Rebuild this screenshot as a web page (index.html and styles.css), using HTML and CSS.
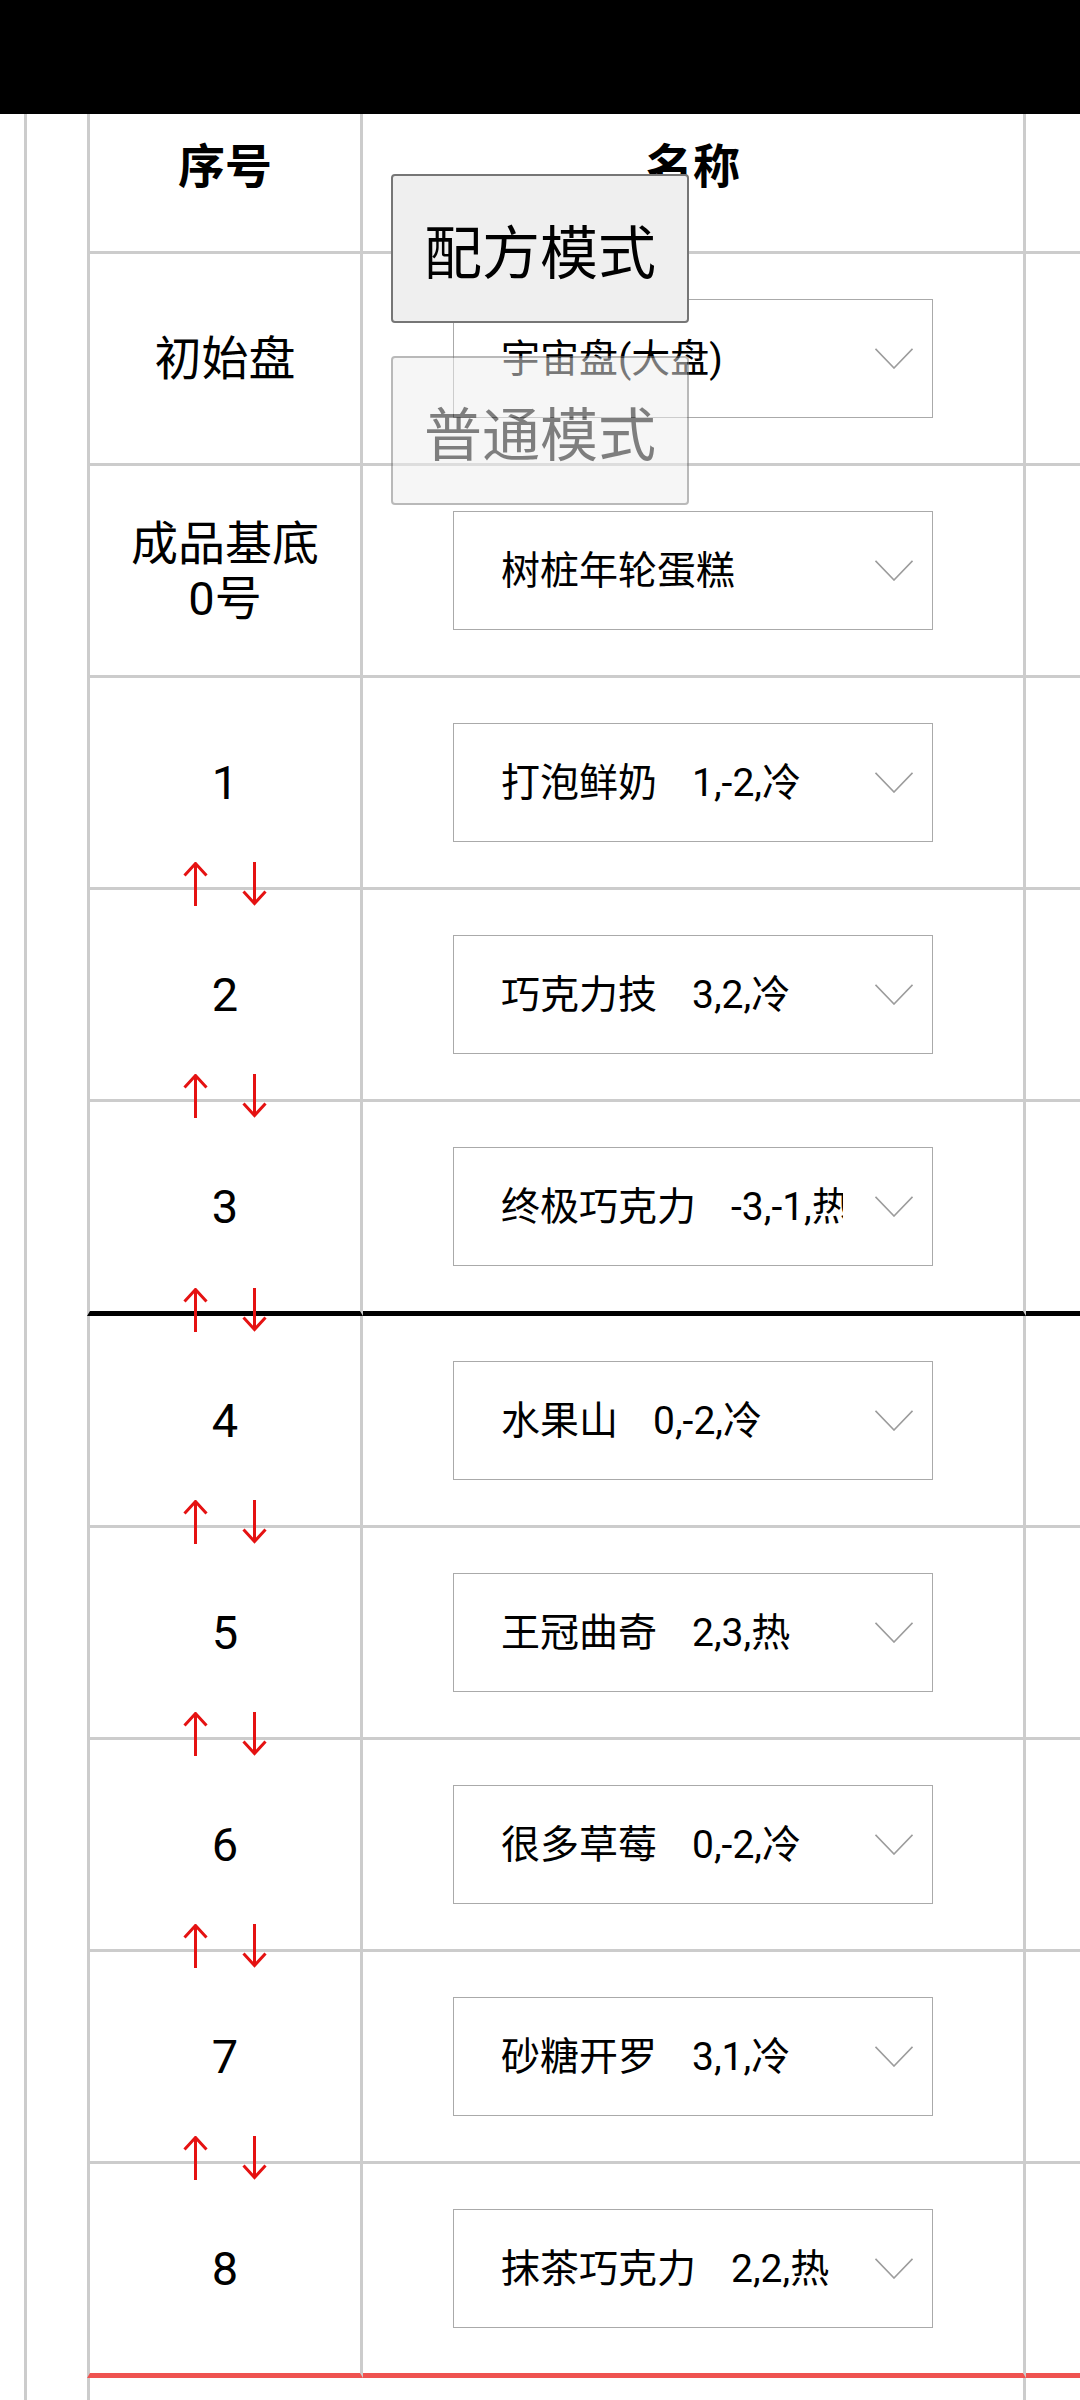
FILE: index.html
```html
<!DOCTYPE html>
<html lang="zh-CN">
<head>
<meta charset="utf-8">
<title>配方</title>
<link rel="stylesheet" href="styles.css">
</head>
<body>
<div class="status-bar"></div>

<button class="mode mode-recipe" type="button">配方模式</button>
<button class="mode mode-normal" type="button">普通模式</button>

<div class="page">
  <table class="grid">
    <thead>
      <tr>
        <th class="c1"><div class="in head">序号</div></th>
        <th class="c2"><div class="in head">名称</div></th>
        <th class="c3"><div class="in head"></div></th>
      </tr>
    </thead>
    <tbody>
      <tr>
        <td class="idx"><div class="in"><span class="label">初始盘</span></div></td>
        <td><div class="in"><div class="sel"><span class="val">宇宙盘(大盘)</span><svg class="chev" width="38" height="21" viewBox="0 0 38 21"><polyline points="0.5,0.8 19,20 37.5,0.8"/></svg></div></div></td>
        <td><div class="in"></div></td>
      </tr>
      <tr>
        <td class="idx"><div class="in"><span class="label">成品基底<br>0号</span></div></td>
        <td><div class="in"><div class="sel"><span class="val">树桩年轮蛋糕</span><svg class="chev" width="38" height="21" viewBox="0 0 38 21"><polyline points="0.5,0.8 19,20 37.5,0.8"/></svg></div></div></td>
        <td><div class="in"></div></td>
      </tr>
      <tr>
        <td class="idx"><div class="in"><span class="label">1</span></div></td>
        <td><div class="in"><div class="sel"><span class="val">打泡鲜奶   1,-2,冷</span><svg class="chev" width="38" height="21" viewBox="0 0 38 21"><polyline points="0.5,0.8 19,20 37.5,0.8"/></svg></div></div></td>
        <td><div class="in"></div></td>
      </tr>
      <tr>
        <td class="idx"><svg class="arrows" width="84" height="44" viewBox="0 0 84 44"><line x1="12.5" y1="1.5" x2="12.5" y2="44"/><polyline points="1.5,13.5 12.5,1.5 23.5,13.5"/><line x1="71.5" y1="0" x2="71.5" y2="42"/><polyline points="60.5,29.5 71.5,41.5 82.5,29.5"/></svg><div class="in"><span class="label">2</span></div></td>
        <td><div class="in"><div class="sel"><span class="val">巧克力技   3,2,冷</span><svg class="chev" width="38" height="21" viewBox="0 0 38 21"><polyline points="0.5,0.8 19,20 37.5,0.8"/></svg></div></div></td>
        <td><div class="in"></div></td>
      </tr>
      <tr class="cut">
        <td class="idx"><svg class="arrows" width="84" height="44" viewBox="0 0 84 44"><line x1="12.5" y1="1.5" x2="12.5" y2="44"/><polyline points="1.5,13.5 12.5,1.5 23.5,13.5"/><line x1="71.5" y1="0" x2="71.5" y2="42"/><polyline points="60.5,29.5 71.5,41.5 82.5,29.5"/></svg><div class="in"><span class="label">3</span></div></td>
        <td><div class="in"><div class="sel"><span class="val">终极巧克力   -3,-1,热</span><svg class="chev" width="38" height="21" viewBox="0 0 38 21"><polyline points="0.5,0.8 19,20 37.5,0.8"/></svg></div></div></td>
        <td><div class="in"></div></td>
      </tr>
      <tr>
        <td class="idx"><svg class="arrows" width="84" height="44" viewBox="0 0 84 44"><line x1="12.5" y1="1.5" x2="12.5" y2="44"/><polyline points="1.5,13.5 12.5,1.5 23.5,13.5"/><line x1="71.5" y1="0" x2="71.5" y2="42"/><polyline points="60.5,29.5 71.5,41.5 82.5,29.5"/></svg><div class="in"><span class="label">4</span></div></td>
        <td><div class="in"><div class="sel"><span class="val">水果山   0,-2,冷</span><svg class="chev" width="38" height="21" viewBox="0 0 38 21"><polyline points="0.5,0.8 19,20 37.5,0.8"/></svg></div></div></td>
        <td><div class="in"></div></td>
      </tr>
      <tr>
        <td class="idx"><svg class="arrows" width="84" height="44" viewBox="0 0 84 44"><line x1="12.5" y1="1.5" x2="12.5" y2="44"/><polyline points="1.5,13.5 12.5,1.5 23.5,13.5"/><line x1="71.5" y1="0" x2="71.5" y2="42"/><polyline points="60.5,29.5 71.5,41.5 82.5,29.5"/></svg><div class="in"><span class="label">5</span></div></td>
        <td><div class="in"><div class="sel"><span class="val">王冠曲奇   2,3,热</span><svg class="chev" width="38" height="21" viewBox="0 0 38 21"><polyline points="0.5,0.8 19,20 37.5,0.8"/></svg></div></div></td>
        <td><div class="in"></div></td>
      </tr>
      <tr>
        <td class="idx"><svg class="arrows" width="84" height="44" viewBox="0 0 84 44"><line x1="12.5" y1="1.5" x2="12.5" y2="44"/><polyline points="1.5,13.5 12.5,1.5 23.5,13.5"/><line x1="71.5" y1="0" x2="71.5" y2="42"/><polyline points="60.5,29.5 71.5,41.5 82.5,29.5"/></svg><div class="in"><span class="label">6</span></div></td>
        <td><div class="in"><div class="sel"><span class="val">很多草莓   0,-2,冷</span><svg class="chev" width="38" height="21" viewBox="0 0 38 21"><polyline points="0.5,0.8 19,20 37.5,0.8"/></svg></div></div></td>
        <td><div class="in"></div></td>
      </tr>
      <tr>
        <td class="idx"><svg class="arrows" width="84" height="44" viewBox="0 0 84 44"><line x1="12.5" y1="1.5" x2="12.5" y2="44"/><polyline points="1.5,13.5 12.5,1.5 23.5,13.5"/><line x1="71.5" y1="0" x2="71.5" y2="42"/><polyline points="60.5,29.5 71.5,41.5 82.5,29.5"/></svg><div class="in"><span class="label">7</span></div></td>
        <td><div class="in"><div class="sel"><span class="val">砂糖开罗   3,1,冷</span><svg class="chev" width="38" height="21" viewBox="0 0 38 21"><polyline points="0.5,0.8 19,20 37.5,0.8"/></svg></div></div></td>
        <td><div class="in"></div></td>
      </tr>
      <tr class="last">
        <td class="idx"><svg class="arrows" width="84" height="44" viewBox="0 0 84 44"><line x1="12.5" y1="1.5" x2="12.5" y2="44"/><polyline points="1.5,13.5 12.5,1.5 23.5,13.5"/><line x1="71.5" y1="0" x2="71.5" y2="42"/><polyline points="60.5,29.5 71.5,41.5 82.5,29.5"/></svg><div class="in"><span class="label">8</span></div></td>
        <td><div class="in"><div class="sel"><span class="val">抹茶巧克力   2,2,热</span><svg class="chev" width="38" height="21" viewBox="0 0 38 21"><polyline points="0.5,0.8 19,20 37.5,0.8"/></svg></div></div></td>
        <td><div class="in"></div></td>
      </tr>
      <tr>
        <td colspan="2"><div class="in foot"></div></td>
        <td><div class="in foot"></div></td>
      </tr>
    </tbody>
  </table>
</div>
</body>
</html>
```

FILE: styles.css
```css
html, body {
  margin: 0;
  padding: 0;
  background: #fff;
  overflow-x: hidden;
}

body {
  position: relative;
  font-family: Roboto, "Noto Sans CJK SC", sans-serif;
  color: #000;
}

.status-bar {
  position: fixed;
  top: 0;
  left: 0;
  right: 0;
  height: 114px;
  background: #000;
  z-index: 20;
}

.page {
  width: max-content;
  margin-left: 24px;
  border-left: 3px solid #cccccc;
  padding: 70px 0 0 60px;
}

.grid {
  width: max-content;
  border-collapse: separate;
  border-spacing: 0;
  border-top: 3px solid #cccccc;
}

.grid th,
.grid td {
  padding: 0;
  border-right: 3px solid #cccccc;
  border-bottom: 3px solid #cccccc;
  vertical-align: middle;
}

.grid th:first-child,
.grid td:first-child {
  border-left: 3px solid #cccccc;
}

.grid tr.cut td {
  border-bottom: 5px solid #000;
}

.grid tr.last td {
  border-bottom: 5px solid #ef5350;
}

.c1 .in { width: 270px; }
.c2 .in { width: 660px; }
.c3 .in { width: 400px; }

.in {
  height: 209px;
  display: flex;
  align-items: center;
  justify-content: center;
}

.in.head {
  height: 178px;
  font-family: "Noto Sans CJK SC", sans-serif;
  font-weight: 700;
  font-size: 47px;
}

.in.foot {
  height: 200px;
}

.idx {
  position: relative;
}

.label {
  font-size: 47px;
  line-height: 55px;
  text-align: center;
  white-space: nowrap;
}

.arrows {
  position: absolute;
  top: -28px;
  left: 93px;
  z-index: 2;
  fill: none;
  stroke: #e51212;
  stroke-width: 3;
}

.sel {
  width: 478px;
  height: 117px;
  border: 1px solid #aaaaaa;
  display: flex;
  align-items: center;
  background: #fff;
}

.val {
  box-sizing: border-box;
  width: 389px;
  padding-left: 47px;
  overflow: hidden;
  white-space: pre;
  word-spacing: 2px;
  font-size: 39px;
  line-height: 56px;
}

.chev {
  margin-left: 32px;
  fill: none;
  stroke: #9c9c9c;
  stroke-width: 1.6;
}

.mode {
  position: absolute;
  left: 391px;
  width: 298px;
  height: 149px;
  box-sizing: border-box;
  margin: 0;
  padding: 0;
  border: 2px solid #767676;
  border-radius: 4px;
  background: #efefef;
  color: #000;
  font-family: "Noto Sans CJK SC", sans-serif;
  font-size: 58px;
  display: flex;
  align-items: center;
  justify-content: center;
  z-index: 10;
}

.mode-recipe {
  top: 174px;
}

.mode-normal {
  top: 356px;
  opacity: 0.5;
}
```
